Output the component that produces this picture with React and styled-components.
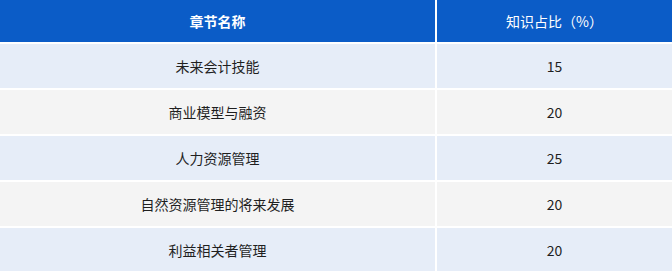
import React from 'react';
import styled, {createGlobalStyle} from 'styled-components';

const GlobalStyle = createGlobalStyle`
  html, body {
    margin: 0;
    padding: 0;
    background: #ffffff;
  }
  body {
    font-family: "Noto Sans CJK SC", "Noto Sans", sans-serif;
  }
`;

const chapters = [
  {name: '未来会计技能', ratio: 15},
  {name: '商业模型与融资', ratio: 20},
  {name: '人力资源管理', ratio: 25},
  {name: '自然资源管理的将来发展', ratio: 20},
  {name: '利益相关者管理', ratio: 20},
];

function App() {
  return (
      <>
        <GlobalStyle/>
        <Table>
          <thead>
          <tr>
            <HeadCell $first>章节名称</HeadCell>
            <HeadCell>知识占比（%）</HeadCell>
          </tr>
          </thead>
          <tbody>
          {chapters.map((item, i) => (
              <Row key={item.name} $odd={i % 2 === 0}>
                <Cell $first>{item.name}</Cell>
                <Cell>{item.ratio}</Cell>
              </Row>
          ))}
          </tbody>
        </Table>
      </>
  );
}

const Table = styled.table`
  width: 672px;
  border-collapse: collapse;
  table-layout: fixed;
`;

const HeadCell = styled.th`
  width: ${(p) => (p.$first ? '435px' : 'auto')};
  height: 42px;
  padding: 0;
  background: #0b5cc7;
  color: #ffffff;
  font-size: 14px;
  font-weight: ${(p) => (p.$first ? 700 : 400)};
  text-align: center;
  border-bottom: 2px solid #ffffff;
  border-right: ${(p) => (p.$first ? '2px solid #ffffff' : 'none')};
`;

const Row = styled.tr`
  background: ${(p) => (p.$odd ? '#e6edf8' : '#f4f4f4')};
`;

const Cell = styled.td`
  height: 44px;
  padding: 0;
  font-size: 14px;
  color: #1f1f1f;
  text-align: center;
  border-bottom: 2px solid #ffffff;
  border-right: ${(p) => (p.$first ? '2px solid #ffffff' : 'none')};
`;

export default App;
